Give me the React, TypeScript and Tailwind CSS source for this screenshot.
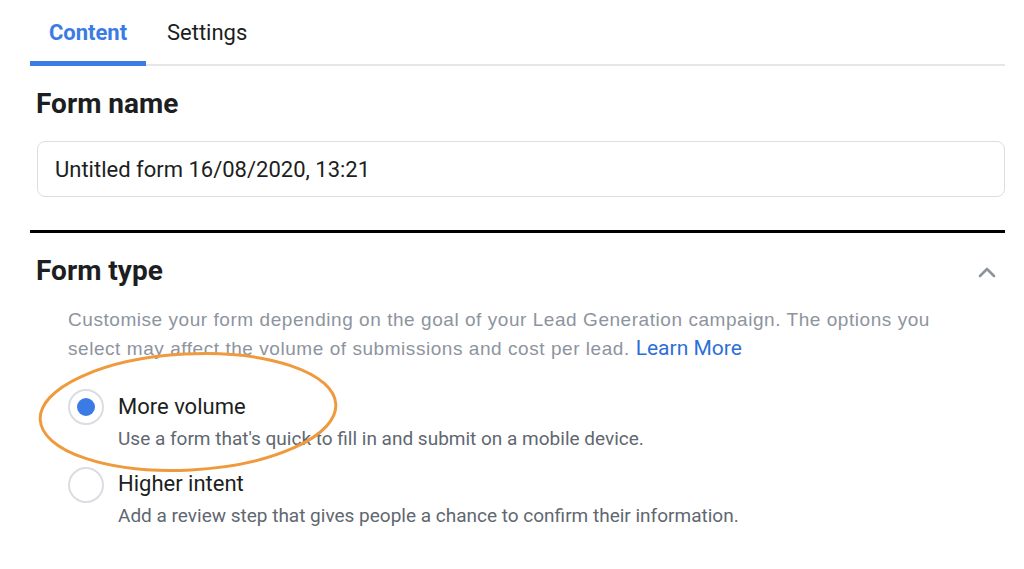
import React from "react";

export default function App() {
  return (
    <div className="relative w-[1024px] h-[569px] bg-white overflow-hidden" style={{ fontFamily: "Roboto, 'Liberation Sans', sans-serif" }}>
      <div className="pl-[30px] pr-[19px]">
        {/* Tabs */}
        <div className="flex border-b-2 border-[#e4e6e9] h-[66px]">
          <div className="w-[116px] flex flex-col">
            <div className="flex-1 flex items-center justify-center pt-[4px] text-[22px] font-bold text-[#3a7be6]">Content</div>
            <div className="h-[5px] bg-[#3a7be6] -mb-[2px]" />
          </div>
          <div className="flex items-start pt-[16px] pl-[21px] text-[22px] text-[#1c1e21]">Settings</div>
        </div>

        {/* Form name */}
        <div className="pl-[6px] pt-[22px] text-[28px] font-bold text-[#1c1e21] leading-[32px]">Form name</div>
        <div className="ml-[7px] mt-[21px] h-[56px] border border-[#dadde1] rounded-[8px] flex items-center pl-[17px] text-[22px] text-[#1c1e21]">
          Untitled form 16/08/2020, 13:21
        </div>

        <div className="mt-[33px] h-[3px] bg-black" />

        {/* Form type */}
        <div className="flex items-center justify-between pl-[6px] pr-[8px] mt-[22px]">
          <div className="text-[28px] font-bold text-[#1c1e21] leading-[32px]">Form type</div>
          <svg width="20" height="12" viewBox="0 0 20 12" className="mt-[2px]">
            <path d="M3 10 L10 3 L17 10" fill="none" stroke="#8d949e" strokeWidth="2.6" strokeLinecap="round" strokeLinejoin="round" />
          </svg>
        </div>

        <div className="pl-[38px] mt-[19px] text-[19px] leading-[28px] text-[#8d949e] tracking-[0.55px]" style={{ fontFamily: "'Liberation Sans', Arial, sans-serif" }}>
          Customise your form depending on the goal of your Lead Generation campaign. The options you
          <br />
          select may affect the volume of submissions and cost per lead.{" "}
          <span className="text-[#2d6fd9] text-[21px] tracking-normal" style={{ fontFamily: "Roboto, sans-serif" }}>Learn More</span>
        </div>

        {/* Options */}
        <div className="pl-[38px] mt-[26px] flex flex-col">
          <div className="flex">
            <div className="w-[36px] h-[36px] rounded-full border-2 border-[#dadde1] flex items-center justify-center shrink-0">
              <div className="w-[18px] h-[18px] rounded-full bg-[#3a7be6]" />
            </div>
            <div className="pl-[14px]">
              <div className="text-[22px] leading-[36px] text-[#1c1e21]">More volume</div>
              <div className="text-[19px] leading-[28px] text-[#606770]">Use a form that's quick to fill in and submit on a mobile device.</div>
            </div>
          </div>
          <div className="flex mt-[14px]">
            <div className="w-[36px] h-[36px] rounded-full border-2 border-[#dadde1] shrink-0" />
            <div className="pl-[14px]">
              <div className="text-[22px] leading-[36px] text-[#1c1e21] -mt-[1px]">Higher intent</div>
              <div className="text-[19px] leading-[28px] text-[#606770]">Add a review step that gives people a chance to confirm their information.</div>
            </div>
          </div>
        </div>
      </div>

      {/* Annotation ellipse */}
      <svg className="absolute left-0 top-0 pointer-events-none" width="1024" height="569" viewBox="0 0 1024 569">
        <ellipse cx="188" cy="412" rx="148" ry="58" transform="rotate(-3 188 412)" fill="none" stroke="#ef9a3c" strokeWidth="3" />
      </svg>
    </div>
  );
}
